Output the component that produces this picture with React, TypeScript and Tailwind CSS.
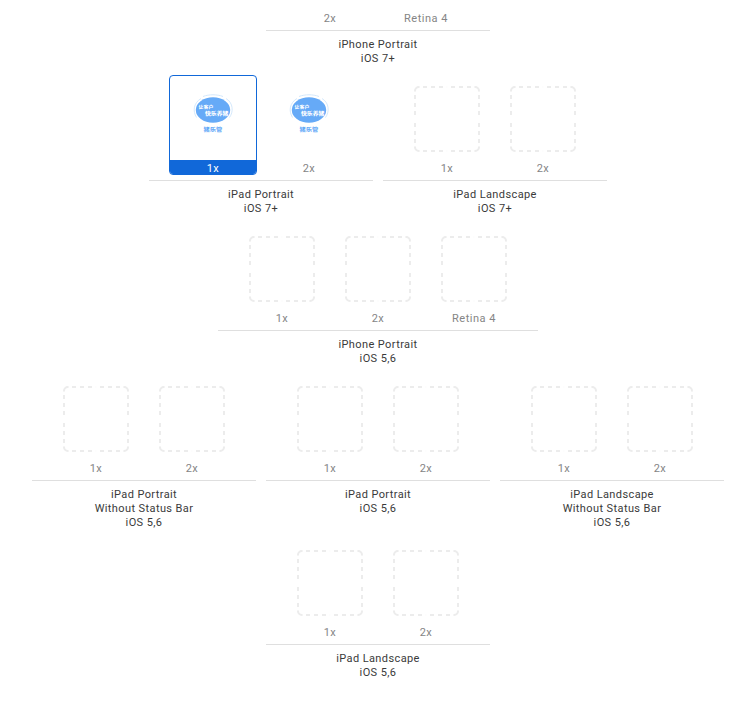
type Slot = { label: string; kind?: "art" | "blank"; selected?: boolean };
type Group = { slots: Slot[]; caption: string[] };

const oneTwo: Slot[] = [{ label: "1x" }, { label: "2x" }];

const rows: Group[][] = [
  [
    {
      slots: [
        { label: "2x", kind: "blank" },
        { label: "Retina 4", kind: "blank" },
      ],
      caption: ["iPhone Portrait", "iOS 7+"],
    },
  ],
  [
    {
      slots: [
        { label: "1x", kind: "art", selected: true },
        { label: "2x", kind: "art" },
      ],
      caption: ["iPad Portrait", "iOS 7+"],
    },
    { slots: oneTwo, caption: ["iPad Landscape", "iOS 7+"] },
  ],
  [
    {
      slots: [{ label: "1x" }, { label: "2x" }, { label: "Retina 4" }],
      caption: ["iPhone Portrait", "iOS 5,6"],
    },
  ],
  [
    { slots: oneTwo, caption: ["iPad Portrait", "Without Status Bar", "iOS 5,6"] },
    { slots: oneTwo, caption: ["iPad Portrait", "iOS 5,6"] },
    { slots: oneTwo, caption: ["iPad Landscape", "Without Status Bar", "iOS 5,6"] },
  ],
  [{ slots: oneTwo, caption: ["iPad Landscape", "iOS 5,6"] }],
];

function EmptyWell() {
  return (
    <svg width="66" height="66" viewBox="0 0 66 66" fill="none" stroke="#ececec" strokeWidth="2">
      <path d="M1 5.5V5a4 4 0 0 1 4-4h.5M60.500 1H61a4 4 0 0 1 4 4v.5M65 60.500V61a4 4 0 0 1-4 4h-.5M5.500 65H5a4 4 0 0 1-4-4v-.5" />
      <path d="M9 1h4m4 0h4m4 0h4m3.900 0h.2m3.900 0h4m4 0h4m4 0h4M9 65h4m4 0h4m4 0h4m3.900 0h.2m3.900 0h4m4 0h4m4 0h4" />
      <path d="M1 9v4m0 4v4m0 4v4m0 3.900v.2m0 3.900v4m0 4v4m0 4v4M65 9v4m0 4v4m0 4v4m0 3.900v.2m0 3.900v4m0 4v4m0 4v4" />
    </svg>
  );
}

function LaunchArt() {
  return (
    <svg
      width="66"
      height="66"
      viewBox="0 0 66 66"
      className="font-['Noto_Sans_CJK_SC',sans-serif] font-black tracking-normal"
    >
      <g fill="none" stroke="#cfe5fb" strokeWidth="0.9">
        <path d="M16.500 31.500C12.500 25 13.500 17 21 12.500" />
        <path d="M23 10.500C29 8.200 37 8.200 43 10.500" />
        <path d="M46 12.500C53.500 17 53.500 26 49.500 31.500" />
      </g>
      <ellipse cx="33" cy="24" rx="17.200" ry="12.700" fill="#66aaf7" />
      <g fill="#fff" fontSize="5">
        <text transform="translate(18.600 22.800) scale(0.980 0.800)">让客户</text>
        <text transform="translate(25 28.900) scale(1.170 0.900)">快乐养猪</text>
      </g>
      <text transform="translate(23.600 44.700) scale(1.240 1)" fontSize="5" fill="#66aaf7">
        猪乐管
      </text>
    </svg>
  );
}

function SlotCell({ slot }: { slot: Slot }) {
  return (
    <div
      className={`flex h-[100px] w-[88px] flex-col items-center justify-between overflow-hidden rounded-[4px] border ${
        slot.selected ? "border-[#1168d9]" : "border-transparent"
      }`}
    >
      <div className="pt-[10px]">
        {slot.kind === "art" && <LaunchArt />}
        {!slot.kind && <EmptyWell />}
      </div>
      <div
        className={`h-[14px] w-full text-center leading-[18px] tracking-[0.5px] ${
          slot.selected ? "bg-[#1168d9] text-white" : "text-[#858585]"
        }`}
      >
        {slot.label}
      </div>
    </div>
  );
}

function SlotGroup({ group }: { group: Group }) {
  return (
    <section className="pt-[5px] pb-1">
      <div className="flex gap-2 border-b border-[#dfdfdf] px-5 pb-[5px]">
        {group.slots.map((slot) => (
          <SlotCell key={slot.label} slot={slot} />
        ))}
      </div>
      <div className="pt-[7px] text-center leading-[14px] text-[#3a3a3a]">
        {group.caption.map((line) => (
          <p key={line}>{line}</p>
        ))}
      </div>
    </section>
  );
}

export default function App() {
  return (
    <div className="h-[703px] w-full overflow-hidden bg-white font-['Roboto',sans-serif] text-[11px] tracking-[0.4px]">
      <div className="-mt-20 w-[756px]">
        {rows.map((groups, i) => (
          <div key={i} className="flex items-start justify-center gap-[10px]">
            {groups.map((group, j) => (
              <SlotGroup key={j} group={group} />
            ))}
          </div>
        ))}
      </div>
    </div>
  );
}
